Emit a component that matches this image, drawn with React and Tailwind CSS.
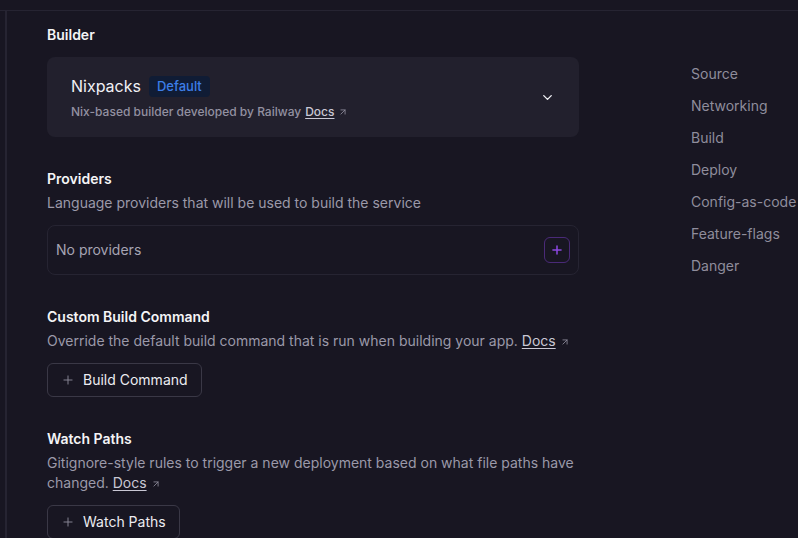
import React from 'react';
import { ChevronDown, Plus, ArrowUpRight } from 'lucide-react';

const navItems = ['Source', 'Networking', 'Build', 'Deploy', 'Config-as-code', 'Feature-flags', 'Danger'];

function DocsLink() {
  return (
    <span className="whitespace-nowrap">
      <span className="underline underline-offset-2 text-[#c9c7d4]">Docs</span>
      <ArrowUpRight className="ml-[4px] inline h-[10px] w-[10px] align-[-1px] text-[#8f8d9c]" strokeWidth={2} />
    </span>
  );
}

function Section({ title, children, description }) {
  return (
    <section className="flex flex-col">
      <h3 className="text-sm font-semibold leading-5 text-[#f4f4f6]">{title}</h3>
      {description && <p className="mt-1 text-sm leading-5 text-[#9b99a9]">{description}</p>}
      <div className="mt-3">{children}</div>
    </section>
  );
}

function AddButton({ label }) {
  return (
    <button className="flex h-[34px] items-center gap-[8px] rounded-md border border-[#3a3846] px-[13px] text-sm text-[#ececf1]">
      <Plus className="h-[14px] w-[14px] text-[#8c8a99]" strokeWidth={1.6} />
      {label}
    </button>
  );
}

export default function App() {
  return (
    <div className="min-h-[538px] bg-[#181622] pt-[10px] font-['Inter',sans-serif] overflow-hidden">
      <div className="border-t border-[#262432] pl-[5px]">
        <div className="flex border-l-2 border-[#262432] min-h-[528px]">
          <main className="flex w-[572px] shrink-0 flex-col gap-[32px] pl-[40px] pt-[14px]">
            <section className="flex flex-col">
              <h3 className="text-sm font-semibold leading-5 text-[#f4f4f6]">Builder</h3>
              <div className="mt-3 flex h-[80px] w-[532px] items-center justify-between rounded-lg bg-[#22202d] pl-6 pr-[24px]">
                <div className="flex flex-col gap-[6px]">
                  <div className="flex items-center gap-[8px]">
                    <span className="text-base leading-6 text-[#f1f1f5]">Nixpacks</span>
                    <span className="rounded-[4px] bg-[#101c35] px-[8px] py-[2px] text-[13px] font-medium leading-[17px] text-[#3d7ee8]">Default</span>
                  </div>
                  <div className="flex items-center gap-[4px] text-xs font-medium leading-4 text-[#9391a1]">
                    Nix-based builder developed by Railway
                    <DocsLink />
                  </div>
                </div>
                <ChevronDown className="h-[15px] w-[15px] text-[#f1f1f5]" strokeWidth={2.2} />
              </div>
            </section>

            <Section title="Providers" description="Language providers that will be used to build the service">
              <div className="flex h-[50px] w-[532px] items-center justify-between rounded-lg border border-[#262432] pl-[8px] pr-[8px]">
                <span className="text-sm text-[#a6a4b3]">No providers</span>
                <button className="flex h-[26px] w-[26px] items-center justify-center rounded-md border border-[#4a2a78]">
                  <Plus className="h-[14px] w-[14px] text-[#8b47e0]" strokeWidth={2.6} />
                </button>
              </div>
            </Section>

            <Section
              title="Custom Build Command"
              description={
                <>
                  Override the default build command that is run when building your app. <DocsLink />
                </>
              }
            >
              <div className="flex">
                <AddButton label="Build Command" />
              </div>
            </Section>

            <Section
              title="Watch Paths"
              description={
                <>
                  Gitignore-style rules to trigger a new deployment based on what file paths have changed. <DocsLink />
                </>
              }
            >
              <div className="flex">
                <AddButton label="Watch Paths" />
              </div>
            </Section>
          </main>

          <nav className="ml-[112px] flex flex-col gap-3 pt-[53px] whitespace-nowrap">
            {navItems.map((item) => (
              <span key={item} className="text-sm leading-5 text-[#8f8d9c]">
                {item}
              </span>
            ))}
          </nav>
        </div>
      </div>
    </div>
  );
}
